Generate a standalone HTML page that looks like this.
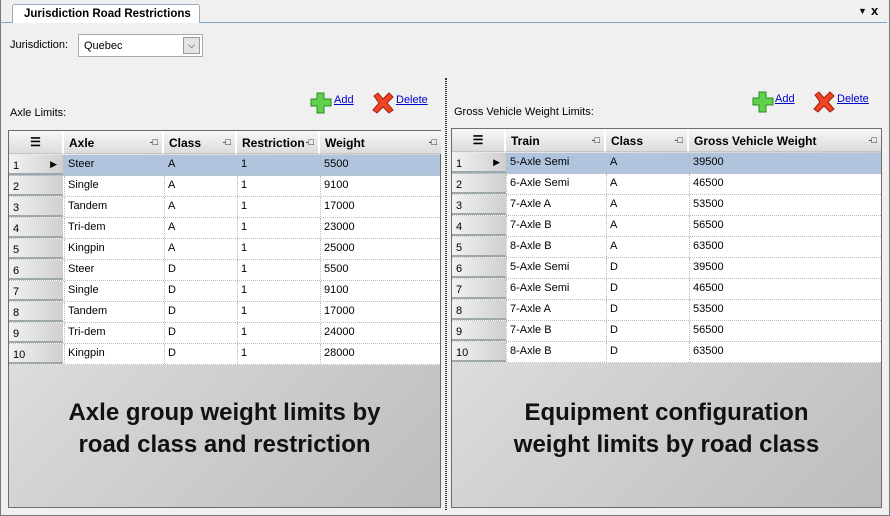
<!DOCTYPE html>
<html><head><meta charset="utf-8"><style>
*{margin:0;padding:0;box-sizing:border-box}
body{width:890px;height:516px;background:#f0f0f0;font-family:"Liberation Sans",sans-serif;font-size:11px;color:#000;position:relative;overflow:hidden}
.a{position:absolute;white-space:nowrap}
.grid{position:absolute;border:1px solid #6d6d6d;background:linear-gradient(135deg,#ececec 0%,#d2d2d2 50%,#bdbdbd 100%)}
.hdr{position:absolute;top:0;height:23px;background:linear-gradient(#f7f7f7,#dcdcdc);border-right:2px solid #fff;border-bottom:1px solid #bfc7c7;font-weight:bold;font-size:12px;padding:5px 0 0 5px;white-space:nowrap}
.pin{position:absolute;right:4px;top:6px;font-size:9px;font-weight:normal}
.row{position:absolute;left:0;height:21px;background:#fff;border-bottom:1px dotted #bbb}
.row.sel{background:#b0c4de}
.rh{position:absolute;left:0;top:0;width:54px;height:20px;background:linear-gradient(90deg,#f2f2f2,#cfcfcf);border-bottom:2px solid #9fa8a8;font-size:11px;padding:5px 0 0 4px}
.c{position:absolute;top:0;height:20px;padding:3px 0 0 3px;border-left:1px dotted #bbb}
.big{position:absolute;font-weight:bold;font-size:24px;text-align:center;line-height:32px;color:#111}
a{color:#00c;text-decoration:underline;font-size:11px}
</style></head><body>
<div class="a" style="left:0;top:0;width:890px;height:516px;border:1px solid #777;border-top:none"></div>
<div class="a" style="left:0;top:22px;width:887px;height:1px;background:#7ea6c8"></div>
<div class="a" style="left:12px;top:4px;width:188px;height:19px;background:#fff;border:1px solid #9ab;border-bottom:none;border-radius:3px 3px 0 0;font-weight:bold;font-size:11.5px;padding:3px 0 0 11px">Jurisdiction Road Restrictions</div>
<div class="a" style="left:858px;top:6px;font-size:9px">▼</div>
<div class="a" style="left:871px;top:3px;font-size:13px;font-weight:bold">x</div>
<div class="a" style="left:10px;top:39px">Jurisdiction:</div>
<div class="a" style="left:78px;top:34px;width:125px;height:23px;background:#fff;border:1px solid #aaa;padding:5px 0 0 5px">Quebec
<div class="a" style="right:2px;top:2px;width:17px;height:17px;background:#e4e4e4;border:1px solid #999;font-size:9px;text-align:center;line-height:15px">⌵</div></div>
<div class="a" style="left:445px;top:78px;width:2px;height:432px;border-left:1px dotted #333;border-right:1px dotted #333"></div>

<div class="a" style="left:10px;top:107px">Axle Limits:</div>
<svg class="a" style="left:310px;top:92px" width="22" height="22" viewBox="0 0 22 22"><path d="M7 1h7v6h7v7h-7v7H7v-7H1V7h6z" fill="#5fd24a" stroke="#2e8a22"/></svg>
<a class="a" style="left:334px;top:94px">Add</a>
<svg class="a" style="left:372px;top:92px" width="22" height="22" viewBox="0 0 22 22"><path d="M2 4l4-3 5 6 6-6 4 4-6 6 6 7-4 3-6-6-6 6-4-3 6-7z" fill="#ee4422" stroke="#a02010"/></svg>
<a class="a" style="left:396px;top:94px">Delete</a>

<div class="a" style="left:454px;top:106px">Gross Vehicle Weight Limits:</div>
<svg class="a" style="left:752px;top:91px" width="22" height="22" viewBox="0 0 22 22"><path d="M7 1h7v6h7v7h-7v7H7v-7H1V7h6z" fill="#5fd24a" stroke="#2e8a22"/></svg>
<a class="a" style="left:775px;top:93px">Add</a>
<svg class="a" style="left:813px;top:91px" width="22" height="22" viewBox="0 0 22 22"><path d="M2 4l4-3 5 6 6-6 4 4-6 6 6 7-4 3-6-6-6 6-4-3 6-7z" fill="#ee4422" stroke="#a02010"/></svg>
<a class="a" style="left:837px;top:93px">Delete</a>

<div class="grid" style="left:8px;top:130px;width:433px;height:378px">
<div class="hdr" style="left:0;width:55px;text-align:center;padding:4px 0 0">☰</div>
<div class="hdr" style="left:55px;width:100px">Axle<span class="pin">-□</span></div>
<div class="hdr" style="left:155px;width:73px">Class<span class="pin">-□</span></div>
<div class="hdr" style="left:228px;width:83px">Restriction<span class="pin">-□</span></div>
<div class="hdr" style="left:311px;width:121px;border-right:none">Weight<span class="pin">-□</span></div>
<div class="row sel" style="top:24px;width:431px"><div class="rh">1<span style="position:absolute;right:6px;top:4px;font-size:9px">▶</span></div><div class="c" style="left:55px">Steer</div><div class="c" style="left:155px">A</div><div class="c" style="left:228px">1</div><div class="c" style="left:311px">5500</div></div>
<div class="row" style="top:45px;width:431px"><div class="rh">2</div><div class="c" style="left:55px">Single</div><div class="c" style="left:155px">A</div><div class="c" style="left:228px">1</div><div class="c" style="left:311px">9100</div></div>
<div class="row" style="top:66px;width:431px"><div class="rh">3</div><div class="c" style="left:55px">Tandem</div><div class="c" style="left:155px">A</div><div class="c" style="left:228px">1</div><div class="c" style="left:311px">17000</div></div>
<div class="row" style="top:87px;width:431px"><div class="rh">4</div><div class="c" style="left:55px">Tri-dem</div><div class="c" style="left:155px">A</div><div class="c" style="left:228px">1</div><div class="c" style="left:311px">23000</div></div>
<div class="row" style="top:108px;width:431px"><div class="rh">5</div><div class="c" style="left:55px">Kingpin</div><div class="c" style="left:155px">A</div><div class="c" style="left:228px">1</div><div class="c" style="left:311px">25000</div></div>
<div class="row" style="top:129px;width:431px"><div class="rh">6</div><div class="c" style="left:55px">Steer</div><div class="c" style="left:155px">D</div><div class="c" style="left:228px">1</div><div class="c" style="left:311px">5500</div></div>
<div class="row" style="top:150px;width:431px"><div class="rh">7</div><div class="c" style="left:55px">Single</div><div class="c" style="left:155px">D</div><div class="c" style="left:228px">1</div><div class="c" style="left:311px">9100</div></div>
<div class="row" style="top:171px;width:431px"><div class="rh">8</div><div class="c" style="left:55px">Tandem</div><div class="c" style="left:155px">D</div><div class="c" style="left:228px">1</div><div class="c" style="left:311px">17000</div></div>
<div class="row" style="top:192px;width:431px"><div class="rh">9</div><div class="c" style="left:55px">Tri-dem</div><div class="c" style="left:155px">D</div><div class="c" style="left:228px">1</div><div class="c" style="left:311px">24000</div></div>
<div class="row" style="top:213px;width:431px"><div class="rh">10</div><div class="c" style="left:55px">Kingpin</div><div class="c" style="left:155px">D</div><div class="c" style="left:228px">1</div><div class="c" style="left:311px">28000</div></div>
<div class="big" style="left:0;width:431px;top:266px">Axle group weight limits by<br>road class and restriction</div>
</div>

<div class="grid" style="left:451px;top:128px;width:431px;height:380px">
<div class="hdr" style="left:0;width:54px;text-align:center;padding:4px 0 0">☰</div>
<div class="hdr" style="left:54px;width:100px">Train<span class="pin">-□</span></div>
<div class="hdr" style="left:154px;width:83px">Class<span class="pin">-□</span></div>
<div class="hdr" style="left:237px;width:192px;border-right:none">Gross Vehicle Weight<span class="pin">-□</span></div>
<div class="row sel" style="top:24px;width:429px"><div class="rh">1<span style="position:absolute;right:6px;top:4px;font-size:9px">▶</span></div><div class="c" style="left:54px">5-Axle Semi</div><div class="c" style="left:154px">A</div><div class="c" style="left:237px">39500</div></div>
<div class="row" style="top:45px;width:429px"><div class="rh">2</div><div class="c" style="left:54px">6-Axle Semi</div><div class="c" style="left:154px">A</div><div class="c" style="left:237px">46500</div></div>
<div class="row" style="top:66px;width:429px"><div class="rh">3</div><div class="c" style="left:54px">7-Axle A</div><div class="c" style="left:154px">A</div><div class="c" style="left:237px">53500</div></div>
<div class="row" style="top:87px;width:429px"><div class="rh">4</div><div class="c" style="left:54px">7-Axle B</div><div class="c" style="left:154px">A</div><div class="c" style="left:237px">56500</div></div>
<div class="row" style="top:108px;width:429px"><div class="rh">5</div><div class="c" style="left:54px">8-Axle B</div><div class="c" style="left:154px">A</div><div class="c" style="left:237px">63500</div></div>
<div class="row" style="top:129px;width:429px"><div class="rh">6</div><div class="c" style="left:54px">5-Axle Semi</div><div class="c" style="left:154px">D</div><div class="c" style="left:237px">39500</div></div>
<div class="row" style="top:150px;width:429px"><div class="rh">7</div><div class="c" style="left:54px">6-Axle Semi</div><div class="c" style="left:154px">D</div><div class="c" style="left:237px">46500</div></div>
<div class="row" style="top:171px;width:429px"><div class="rh">8</div><div class="c" style="left:54px">7-Axle A</div><div class="c" style="left:154px">D</div><div class="c" style="left:237px">53500</div></div>
<div class="row" style="top:192px;width:429px"><div class="rh">9</div><div class="c" style="left:54px">7-Axle B</div><div class="c" style="left:154px">D</div><div class="c" style="left:237px">56500</div></div>
<div class="row" style="top:213px;width:429px"><div class="rh">10</div><div class="c" style="left:54px">8-Axle B</div><div class="c" style="left:154px">D</div><div class="c" style="left:237px">63500</div></div>
<div class="big" style="left:0;width:429px;top:268px">Equipment configuration<br>weight limits by road class</div>
</div>
</body></html>
